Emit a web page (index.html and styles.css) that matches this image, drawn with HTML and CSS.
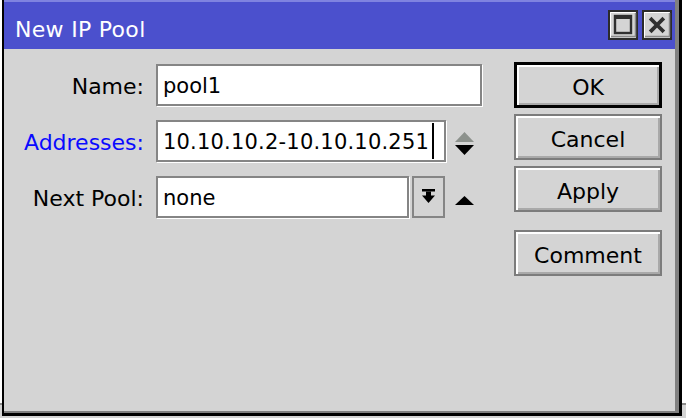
FILE: index.html
```html
<!DOCTYPE html>
<html>
<head>
<meta charset="utf-8">
<title>New IP Pool</title>
<link rel="stylesheet" href="styles.css">
</head>
<body>
<div class="desk">
  <div class="desk-top"></div>
  <div class="desk-line"></div>
  <div class="desk-floor"></div>
</div>
<div class="window">
  <div class="frame">
    <div class="titlebar">
      <span class="title">New IP Pool</span>
      <div class="tbtns">
        <svg class="tbtn" width="30" height="30" viewBox="0 0 30 30">
          <rect x="0" y="0" width="30" height="30" fill="#d4d4d4"/>
          <rect x="1" y="1" width="28" height="28" fill="none" stroke="#2b2b2b" stroke-width="2"/>
          <path d="M2.5 27.5V2.5h25" fill="none" stroke="#fff" stroke-width="1"/>
          <path d="M3 26.5h24.5V3" fill="none" stroke="#8a8a8a" stroke-width="1.5"/>
          <rect x="7" y="6" width="16" height="17" fill="none" stroke="#2f2f2f" stroke-width="2.4"/>
          <rect x="6" y="5" width="18" height="4" fill="#2f2f2f"/>
        </svg>
        <svg class="tbtn" width="30" height="30" viewBox="0 0 30 30">
          <rect x="0" y="0" width="30" height="30" fill="#d4d4d4"/>
          <rect x="1" y="1" width="28" height="28" fill="none" stroke="#2b2b2b" stroke-width="2"/>
          <path d="M2.5 27.5V2.5h25" fill="none" stroke="#fff" stroke-width="1"/>
          <path d="M3 26.5h24.5V3" fill="none" stroke="#8a8a8a" stroke-width="1.5"/>
          <path d="M9.5 9.5l11 11M20.5 9.5l-11 11" fill="none" stroke="#2f2f2f" stroke-width="3.8" stroke-linecap="square"/>
        </svg>
      </div>
    </div>
    <div class="body">
      <div class="form">
        <span class="lbl">Name:</span>
        <div class="row"><div class="field w-name">pool1</div></div>
        <span class="lbl lbl-blue">Addresses:</span>
        <div class="row">
          <div class="field w-addr"><span class="ftext">10.10.10.2-10.10.10.251</span><span class="caret"></span></div>
          <svg class="spinner" width="19" height="24" viewBox="0 0 19 24">
            <polygon points="0,10 9.5,0 19,10" fill="#8c918c"/>
            <polygon points="0,13 19,13 9.5,23" fill="#000"/>
          </svg>
        </div>
        <span class="lbl">Next Pool:</span>
        <div class="row">
          <div class="field w-next">none</div>
          <div class="dropbtn">
            <svg width="13" height="15" viewBox="0 0 13 15">
              <rect x="0" y="0" width="13" height="2.5" fill="#000"/>
              <rect x="4" y="2.5" width="5" height="4.5" fill="#000"/>
              <polygon points="0,6.5 13,6.5 6.5,14" fill="#000"/>
            </svg>
          </div>
          <svg class="uparrow" width="19" height="9" viewBox="0 0 19 9">
            <polygon points="0,9 9.5,0 19,9" fill="#000"/>
          </svg>
        </div>
      </div>
      <div class="buttons">
        <div class="btn btn-default">OK</div>
        <div class="btn">Cancel</div>
        <div class="btn">Apply</div>
        <div class="btn btn-gap">Comment</div>
      </div>
    </div>
  </div>
</div>
</body>
</html>
```

FILE: styles.css
```css
html, body {
  margin: 0;
  padding: 0;
  background: #fff;
  overflow: hidden;
  font-family: "DejaVu Sans", "Liberation Sans", sans-serif;
  color: #000;
}

.desk {
  display: flex;
  flex-direction: column;
  height: 418px;
}
.desk-top { height: 403px; background: #fff; }
.desk-line { height: 2px; background: #8c8c8c; }
.desk-floor { flex: 1; background: #d4d4d4; }

.window {
  position: absolute;
  left: 2px;
  top: 0;
  width: 680px;
  height: 416px;
  box-sizing: border-box;
  border-left: 2px solid #000;
  border-right: 3px solid #000;
  border-bottom: 3px solid #000;
  background: #d4d4d4;
}

.frame {
  height: 100%;
  box-sizing: border-box;
  border-right: 4px solid #808080;
  border-bottom: 2px solid #808080;
}

.titlebar {
  height: 49px;
  box-sizing: border-box;
  border-top: 2px solid #7f83e0;
  background: #4b50cd;
  display: flex;
  align-items: flex-start;
  padding: 0 3px 0 11px;
}

.title {
  color: #fff;
  font-size: 22px;
  line-height: 26px;
  margin-top: 15px;
  letter-spacing: 0.3px;
}

.tbtns {
  margin-left: auto;
  margin-top: 8px;
  display: flex;
  gap: 4px;
}
.tbtn { display: block; }

.body {
  display: flex;
  justify-content: space-between;
  align-items: flex-start;
  padding: 13px 13px 0 0;
}

.form {
  display: grid;
  grid-template-columns: 140px auto;
  grid-auto-rows: 42px;
  column-gap: 12px;
  row-gap: 14px;
  align-items: center;
  padding-top: 2px;
}

.lbl {
  text-align: right;
  font-size: 22px;
  line-height: 26px;
  padding-top: 3px;
}
.lbl-blue { color: #0a0aff; }

.row {
  display: flex;
  align-items: center;
  height: 42px;
}

.field {
  box-sizing: border-box;
  height: 42px;
  border: 2px solid #858585;
  background: #fff;
  box-shadow: 1px 1px 0 #fff;
  font-size: 21px;
  padding: 2px 5px 0 5px;
  display: flex;
  align-items: center;
  white-space: nowrap;
}
.ftext { letter-spacing: 0.2px; }
.w-name { width: 326px; }
.w-addr { width: 290px; }
.w-next { width: 253px; }

.caret {
  display: inline-block;
  width: 2px;
  height: 36px;
  background: #000;
  margin-left: 3px;
  margin-top: -2px;
}

.spinner {
  display: block;
  margin-left: 9px;
  margin-top: 6px;
}

.dropbtn {
  box-sizing: border-box;
  width: 33px;
  height: 42px;
  margin-left: 3px;
  border: 2px solid #858585;
  background: #d4d4d4;
  display: flex;
  justify-content: center;
  align-items: flex-start;
  padding-top: 11px;
}
.dropbtn svg { display: block; }

.uparrow {
  display: block;
  margin-left: 10px;
  margin-top: 6px;
}

.buttons {
  display: flex;
  flex-direction: column;
  gap: 6px;
  width: 148px;
}

.btn {
  height: 46px;
  box-sizing: border-box;
  border: 2px solid #7c7c7c;
  box-shadow: inset 2px 2px 0 #fff, inset -2px -2px 0 #a9a9a9;
  display: flex;
  align-items: center;
  justify-content: center;
  font-size: 22px;
  padding-top: 4px;
}
.btn-default {
  border: 3px solid #000;
}
.btn-gap { margin-top: 12px; }
```
